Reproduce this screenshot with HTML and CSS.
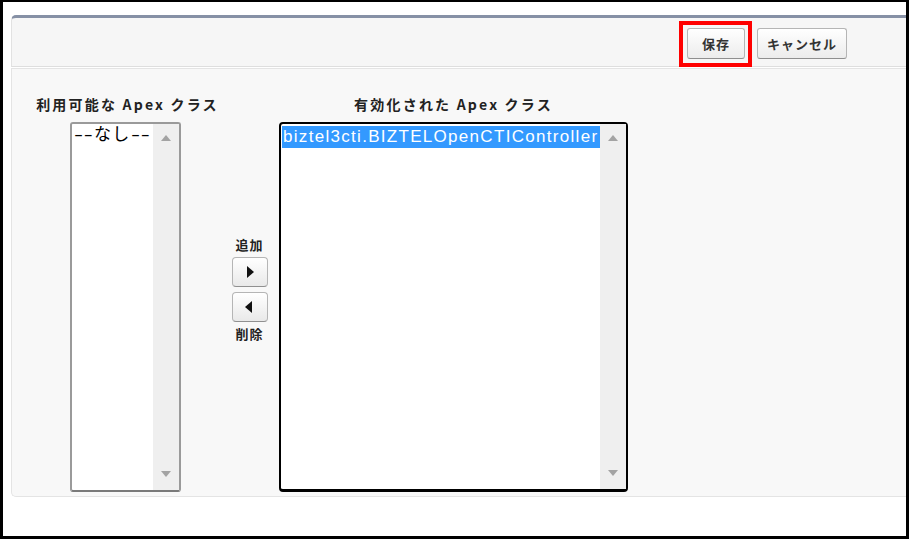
FILE: index.html
```html
<!DOCTYPE html>
<html lang="ja">
<head>
<meta charset="utf-8">
<title>Apex クラス</title>
<link rel="stylesheet" href="styles.css">
</head>
<body>
<div class="frame">
  <div class="panel-head">
    <div class="btn-wrap">
      <button class="btn btn-save">保存</button>
      <span class="highlight"></span>
    </div>
    <button class="btn btn-cancel">キャンセル</button>
  </div>
  <div class="panel-body">
    <div class="col col-left">
      <div class="col-label">利用可能な Apex クラス</div>
      <div class="listbox listbox-grey">
        <div class="list-items">
          <div class="opt"><span class="dash">--</span>なし<span class="dash">--</span></div>
        </div>
        <div class="scrollbar"><span class="arrow-up"></span><span class="arrow-down"></span></div>
      </div>
    </div>
    <div class="col col-mid">
      <div class="mid-label">追加</div>
      <button class="arrow-btn"><span class="tri-right"></span></button>
      <button class="arrow-btn"><span class="tri-left"></span></button>
      <div class="mid-label">削除</div>
    </div>
    <div class="col col-right">
      <div class="col-label">有効化された Apex クラス</div>
      <div class="listbox listbox-black">
        <div class="list-items">
          <div class="opt opt-selected">biztel3cti.BIZTELOpenCTIController</div>
        </div>
        <div class="scrollbar"><span class="arrow-up"></span><span class="arrow-down"></span></div>
      </div>
    </div>
  </div>
</div>
</body>
</html>
```

FILE: styles.css
```css
* { box-sizing: border-box; }
html, body { margin: 0; padding: 0; background: #fff; }

.frame {
  width: 909px;
  height: 539px;
  border-style: solid;
  border-color: #000;
  border-width: 2px 3px 3px 3px;
  overflow: hidden;
  padding: 13px 0 0 8px;
  background: #fff;
  font-family: "Noto Sans CJK JP", "Liberation Sans", sans-serif;
}

.panel-head {
  width: 900px;
  height: 52px;
  border-top: 3px solid #8690a5;
  border-left: 1px solid #e2e2e2;
  border-bottom: 1px solid #dedede;
  border-radius: 5px 0 0 0;
  background: #f6f6f6;
  display: flex;
  justify-content: flex-end;
  align-items: flex-start;
  gap: 12px;
  padding: 10px 64px 0 0;
}

.btn-wrap { position: relative; display: flex; }

.btn {
  height: 31px;
  border: 1px solid #b5b5b5;
  border-bottom-color: #8f8f8f;
  border-radius: 3px;
  background: linear-gradient(#ffffff, #ececec);
  color: #333;
  font-family: "Noto Sans CJK JP", sans-serif;
  font-weight: 700;
  font-size: 13px;
  letter-spacing: 1px;
  padding: 0;
  display: flex;
  align-items: center;
  justify-content: center;
}
.btn-save { width: 58px; }
.btn-cancel { width: 90px; }

.highlight {
  position: absolute;
  left: -8px;
  right: -7px;
  top: -7px;
  bottom: -8px;
  border: 4px solid #ff0000;
  pointer-events: none;
}

.panel-body {
  width: 900px;
  margin-top: 1px;
  border: 1px solid #e4e4e4;
  border-right: none;
  border-radius: 0 0 0 5px;
  background: #f8f8f8;
  padding: 26px 0 4px 23px;
  display: flex;
  align-items: stretch;
}

.col { display: flex; flex-direction: column; align-items: center; }
.col-left { width: 185px; }
.col-left .listbox { align-self: flex-start; margin-left: 35px; }
.col-mid { width: 59px; justify-content: center; gap: 4px; padding-bottom: 8px; }
.col-right { width: 349px; }

.col-label {
  font-weight: 700;
  font-size: 14px;
  line-height: 18px;
  letter-spacing: 2.2px;
  color: #222;
  margin-bottom: 9px;
  white-space: nowrap;
}

.listbox {
  height: 370px;
  display: flex;
  background: #fff;
  border-radius: 3px;
}
.listbox-grey {
  width: 111px;
  border: 2px solid #9a9a9a;
  border-bottom-color: #7a7a7a;
}
.listbox-black {
  width: 349px;
  border: 2px solid #000;
  border-bottom-width: 3px;
  border-radius: 4px;
}

.list-items {
  flex: 1;
  padding: 2px 0 0 1px;
  min-width: 0;
  overflow: hidden;
}
.opt {
  font-family: "Liberation Sans", "Noto Sans CJK JP", sans-serif;
  font-size: 17px;
  line-height: 22px;
  letter-spacing: 1.3px;
  color: #000;
  white-space: nowrap;
  padding-left: 1px;
}
.listbox-grey .list-items { padding-top: 0; }
.dash {
  display: inline-block;
  width: 20px;
  letter-spacing: 0.5px;
  transform: scaleX(1.6);
  transform-origin: left center;
}
.opt-selected {
  background: #3399ff;
  color: #fff;
}

.scrollbar {
  width: 26px;
  background: #efefef;
  display: flex;
  flex-direction: column;
  justify-content: space-between;
  align-items: center;
  padding: 11px 0 13px;
}
.arrow-up {
  width: 0; height: 0;
  border-left: 5px solid transparent;
  border-right: 5px solid transparent;
  border-bottom: 6px solid #a3a3a3;
}
.arrow-down {
  width: 0; height: 0;
  border-left: 5px solid transparent;
  border-right: 5px solid transparent;
  border-top: 6px solid #a3a3a3;
}

.mid-label {
  font-weight: 700;
  font-size: 13px;
  line-height: 16px;
  letter-spacing: 1px;
  color: #222;
}
.arrow-btn {
  width: 36px;
  height: 30px;
  border: 1px solid #b5b5b5;
  border-bottom-color: #909090;
  border-radius: 4px;
  background: linear-gradient(#ffffff, #e9e9e9);
  padding: 0;
  display: flex;
  align-items: center;
  justify-content: center;
}
.arrow-btn + .arrow-btn { margin-top: 1px; }
.tri-right {
  width: 0; height: 0;
  border-top: 6px solid transparent;
  border-bottom: 6px solid transparent;
  border-left: 7px solid #111;
  margin-left: 2px;
}
.tri-left {
  width: 0; height: 0;
  border-top: 6px solid transparent;
  border-bottom: 6px solid transparent;
  border-right: 7px solid #111;
  margin-right: 2px;
}
```
